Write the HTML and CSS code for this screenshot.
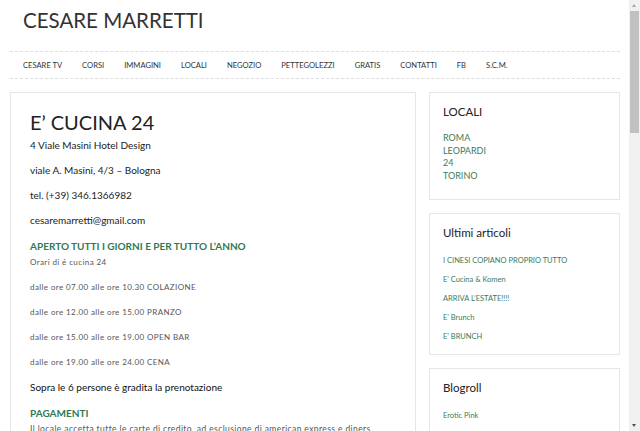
FILE: index.html
```html
<!DOCTYPE html>
<html lang="it">
<head>
<meta charset="utf-8">
<title>Cesare Marretti</title>
<link rel="stylesheet" href="styles.css">
</head>
<body>
<div class="page">
  <header class="site-header">
    <h1 class="site-title">CESARE MARRETTI</h1>
    <nav class="main-nav">
      <ul>
        <li>CESARE TV</li>
        <li>CORSI</li>
        <li>IMMAGINI</li>
        <li>LOCALI</li>
        <li>NEGOZIO</li>
        <li>PETTEGOLEZZI</li>
        <li>GRATIS</li>
        <li>CONTATTI</li>
        <li>FB</li>
        <li>S.C.M.</li>
      </ul>
    </nav>
  </header>
  <div class="content">
    <main class="entry">
      <h2 class="entry-title">E’ CUCINA 24</h2>
      <p class="strong">4 Viale Masini Hotel Design</p>
      <p class="strong">viale A. Masini, 4/3 – Bologna</p>
      <p class="strong">tel. (+39) 346.1366982</p>
      <p class="strong">cesaremarretti@gmail.com</p>
      <h3 class="green-head">APERTO TUTTI I GIORNI E PER TUTTO L’ANNO</h3>
      <p class="light">Orari di é cucina 24</p>
      <p class="light">dalle ore 07.00 alle ore 10.30 COLAZIONE</p>
      <p class="light">dalle ore 12.00 alle ore 15.00 PRANZO</p>
      <p class="light">dalle ore 15.00 alle ore 19.00 OPEN BAR</p>
      <p class="light">dalle ore 19.00 alle ore 24.00 CENA</p>
      <p class="big">Sopra le 6 persone è gradita la prenotazione</p>
      <h3 class="green-head">PAGAMENTI</h3>
      <p class="light light-lg">Il locale accetta tutte le carte di credito, ad esclusione di american express e diners</p>
    </main>
    <aside class="sidebar">
      <section class="widget widget-tight">
        <h4 class="widget-title">LOCALI</h4>
        <ul class="list-tight">
          <li>ROMA</li>
          <li>LEOPARDI</li>
          <li>24</li>
          <li>TORINO</li>
        </ul>
      </section>
      <section class="widget">
        <h4 class="widget-title">Ultimi articoli</h4>
        <ul class="list-spaced">
          <li>I CINESI COPIANO PROPRIO TUTTO</li>
          <li>E’ Cucina &amp; Komen</li>
          <li>ARRIVA L’ESTATE!!!!</li>
          <li>E’ Brunch</li>
          <li>E’ BRUNCH</li>
        </ul>
      </section>
      <section class="widget">
        <h4 class="widget-title">Blogroll</h4>
        <ul class="list-spaced">
          <li>Erotic Pink</li>
          <li>Jamie Oliver</li>
          <li>Gambero Rosso</li>
        </ul>
      </section>
    </aside>
  </div>
</div>
<div class="scrollbar">
  <div class="sb-arrow sb-up"></div>
  <div class="sb-thumb"></div>
  <div class="sb-arrow sb-down"></div>
</div>
</body>
</html>
```
FILE: styles.css
```css
html, body {
  margin: 0;
  padding: 0;
  height: 100%;
  overflow: hidden;
  background: #fff;
}
body {
  font-family: Lato, "Open Sans", sans-serif;
  color: #333;
}
.page {
  width: 610px;
  margin-left: 10px;
}
.site-title {
  margin: 0;
  padding: 8px 0 0 13px;
  height: 46px;
  box-sizing: border-box;
  font-size: 20.5px;
  font-weight: 400;
  line-height: 24px;
  color: #333;
}
.main-nav {
  border-top: 1px dashed #ddd;
  border-bottom: 1px dashed #ddd;
  margin-top: 5px;
}
.main-nav ul {
  list-style: none;
  margin: 0;
  padding: 0 0 0 13px;
  display: flex;
  gap: 20px;
  height: 26px;
  align-items: center;
}
.main-nav li {
  font-size: 7.6px;
  color: #333;
}
.content {
  display: flex;
  gap: 13px;
  margin-top: 13px;
  align-items: flex-start;
}
.entry {
  width: 406px;
  box-sizing: border-box;
  border: 1px solid #e6e6e6;
  padding: 14px 19px 20px;
  height: 400px;
}
.entry-title {
  margin: 0;
  font-size: 20px;
  font-weight: 400;
  line-height: 31px;
  color: #222;
}
.entry p {
  margin: 0 0 10px;
  line-height: 15px;
}
.entry .strong {
  font-size: 10px;
  color: #222;
}
.entry .light {
  font-size: 8px;
  letter-spacing: 0.4px;
  color: #555;
}
.entry .light-lg {
  font-size: 8.5px;
}
.entry .big {
  font-size: 10px;
  color: #111;
  margin-top: 1px;
}
.green-head {
  margin: 2px 0 1px;
  font-size: 10px;
  font-weight: 700;
  line-height: 16px;
  color: #2f7a52;
}
.sidebar {
  width: 191px;
  display: flex;
  flex-direction: column;
  gap: 13px;
}
.widget {
  border: 1px solid #e6e6e6;
  padding: 10px 13px 8px;
}
.widget-tight {
  padding-bottom: 16px;
}
.widget-title {
  margin: 0 0 9px;
  font-size: 11.5px;
  font-weight: 400;
  line-height: 18px;
  color: #222;
}
.widget ul {
  list-style: none;
  margin: 0;
  padding: 0;
}
.list-tight {
  padding-top: 2px !important;
}
.list-tight li {
  font-size: 9px;
  line-height: 12.7px;
  color: #3a7a5a;
}
.list-spaced {
  margin-top: 0;
}
.list-spaced li {
  font-size: 7.5px;
  line-height: 19px;
  color: #3a7a5a;
}
.scrollbar {
  position: fixed;
  top: 0;
  right: 0;
  width: 11px;
  height: 431px;
  background: #f1f1f1;
}
.sb-thumb {
  position: absolute;
  left: 1px;
  right: 1px;
  top: 11px;
  height: 122px;
  background: #c1c1c1;
}
.sb-arrow {
  position: absolute;
  left: 3px;
  width: 0;
  height: 0;
  border-left: 2.5px solid transparent;
  border-right: 2.5px solid transparent;
}
.sb-up {
  top: 4px;
  border-bottom: 3px solid #a3a3a3;
}
.sb-down {
  bottom: 4px;
  border-top: 3px solid #505050;
}
```
